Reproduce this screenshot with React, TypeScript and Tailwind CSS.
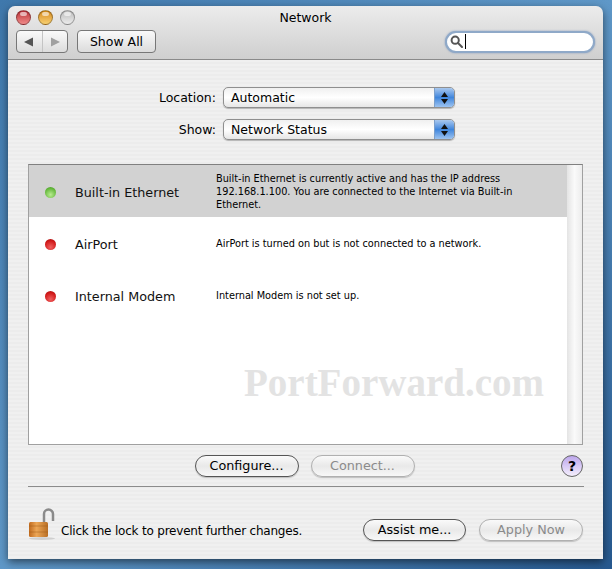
import type { ReactNode } from 'react'

const stripes = 'bg-[repeating-linear-gradient(180deg,#f0f0f0_0px,#f0f0f0_2px,#ececec_2px,#ececec_4px)]'

function Light({ className }: { className: string }) {
  return (
    <div className={`relative w-[15px] h-[15px] rounded-full border border-black/30 ${className}`}>
      <div className="absolute left-[3px] top-[1px] w-[7px] h-[4px] rounded-full bg-white/60" />
    </div>
  )
}

function Pill({ children, width, disabled = false }: { children: ReactNode; width: string; disabled?: boolean }) {
  return (
    <button
      className={`h-[22px] ${width} rounded-full border bg-gradient-to-b from-[#fafafa] via-[#e9e9e9] to-[#f8f8f8] flex items-center justify-center text-[12.75px] ${
        disabled ? 'border-[#b0b0b0] text-[#8a8a8a]' : 'border-[#555] text-black'
      } shadow-[0_1px_1px_rgba(0,0,0,0.2)]`}
    >
      {children}
    </button>
  )
}

function Select({ value }: { value: string }) {
  return (
    <div className="w-[232px] h-[21px] rounded-[5px] border border-[#8f8f8f] bg-gradient-to-b from-[#f0f0f0] via-white to-[#e6e6e6] flex items-center shadow-[0_1px_1px_rgba(0,0,0,0.25)] overflow-hidden">
      <span className="flex-1 pl-[7px] pt-[2px] text-[12.5px] text-black">{value}</span>
      <div className="w-[20px] h-full bg-gradient-to-b from-[#a9c8ee] via-[#3f86dc] to-[#9cc3f0] border-l border-[#7b9fcb] flex flex-col items-center justify-center gap-[2px]">
        <svg width="7" height="5" viewBox="0 0 7 5"><path d="M3.5 0 L7 5 H0 Z" fill="#111" /></svg>
        <svg width="7" height="5" viewBox="0 0 7 5"><path d="M0 0 H7 L3.5 5 Z" fill="#111" /></svg>
      </div>
    </div>
  )
}

function Row({ name, dot, selected = false, children }: { name: string; dot: 'green' | 'red'; selected?: boolean; children: ReactNode }) {
  return (
    <div className={`h-[52px] flex items-center ${selected ? 'bg-[#d2d2d2]' : 'bg-white'}`}>
      <div className="w-[42px] flex justify-center pt-[2px]">
        <div
          className={`w-[11px] h-[11px] rounded-full ${
            dot === 'green'
              ? 'bg-[radial-gradient(circle_at_50%_70%,#b8ec90,#5fb436_70%,#3f8f25)]'
              : 'bg-[radial-gradient(circle_at_50%_75%,#f06060,#d01818_65%,#9a1010)]'
          }`}
        />
      </div>
      <div className="w-[145px] pl-[4px] pt-[4px] text-[12.75px] text-[#111]">{name}</div>
      <div className="flex-1 pr-[40px] text-[9.75px] leading-[13px] text-black">{children}</div>
    </div>
  )
}

export default function App() {
  return (
    <div className="w-[612px] h-[569px] overflow-hidden bg-gradient-to-br from-[#3f78ac] via-[#5f98c8] to-[#27598f] pt-[6px] pl-[8px] pr-[9px] font-['DejaVu_Sans',sans-serif]">
      <div className="w-[595px] h-[553px] rounded-t-[7px] flex flex-col shadow-[0_3px_8px_rgba(0,0,0,0.55)]">
        {/* Title bar */}
        <header className="relative h-[54px] shrink-0 rounded-t-[7px] border-b border-[#8a8a8a] bg-gradient-to-b from-[#ececec] to-[#cfcfcf] px-[8px] pt-[4px]">
          <div className="flex items-center gap-[7px] h-[15px]">
            <Light className="bg-gradient-to-b from-[#b82c36] to-[#f08a8a]" />
            <Light className="bg-gradient-to-b from-[#d68a10] to-[#f8d070]" />
            <Light className="bg-gradient-to-b from-[#bcbcbc] to-[#ececec]" />
          </div>
          <div className="absolute inset-x-0 top-[3px] text-center text-[12.5px] text-black">Network</div>
          <div className="flex items-center justify-between mt-[5px]">
            <div className="flex items-center gap-[9px]">
              <div className="w-[52px] h-[23px] rounded-[4px] border border-[#777] bg-gradient-to-b from-[#fafafa] to-[#dcdcdc] flex items-center">
                <div className="flex-1 flex justify-center border-r border-[#c4c4c4] h-full items-center">
                  <svg width="10" height="10" viewBox="0 0 10 10"><path d="M0 5 L9 0.5 V9.5 Z" fill="#555" /></svg>
                </div>
                <div className="flex-1 flex justify-center">
                  <svg width="10" height="10" viewBox="0 0 10 10"><path d="M10 5 L1 0.5 V9.5 Z" fill="#a0a0a0" /></svg>
                </div>
              </div>
              <button className="w-[79px] h-[23px] pt-[1px] rounded-[4px] border border-[#777] bg-gradient-to-b from-[#fafafa] to-[#dcdcdc] text-[12.5px] text-black">Show All</button>
            </div>
            <div className="w-[150px] h-[22px] rounded-full border-[2px] border-[#8fa9c8] bg-white flex items-center pl-[3px] shadow-[0_0_2px_rgba(70,110,170,0.6)]">
              <svg width="13" height="13" viewBox="0 0 13 13" fill="none" stroke="#555" strokeWidth="2">
                <circle cx="5.2" cy="5.2" r="3.6" />
                <path d="M8 8 L12 12" strokeLinecap="round" />
              </svg>
              <div className="ml-[2px] w-px h-[15px] bg-black" />
            </div>
          </div>
        </header>

        {/* Body */}
        <main className={`flex-1 relative px-[20px] pt-[27px] ${stripes}`}>
          <div className="flex flex-col gap-[11px]">
            <div className="flex items-center pl-[127px] pr-[127px]">
              <span className="w-[68px] pt-[2px] text-right text-[12.5px] mr-[7px] text-black shrink-0 -ml-[7px]">Location:</span>
              <Select value="Automatic" />
            </div>
            <div className="flex items-center pl-[127px] pr-[127px]">
              <span className="w-[68px] pt-[2px] text-right text-[12.5px] mr-[7px] text-black shrink-0 -ml-[7px]">Show:</span>
              <Select value="Network Status" />
            </div>
          </div>

          <div className="mt-[24px] h-[281px] w-[555px] border border-[#a0a0a0] border-t-[#808080] flex bg-white">
            <div className="flex-1 flex flex-col">
              <Row name="Built-in Ethernet" dot="green" selected>
                Built-in Ethernet is currently active and has the IP address 192.168.1.100. You are connected to the Internet via Built-in Ethernet.
              </Row>
              <Row name="AirPort" dot="red">AirPort is turned on but is not connected to a network.</Row>
              <Row name="Internal Modem" dot="red">Internal Modem is not set up.</Row>
            </div>
            <div className="w-[15px] bg-gradient-to-r from-[#e4e4e4] via-[#fafafa] to-[#ececec]" />
          </div>

          <div className="relative flex justify-center gap-[12px] mt-[10px] pr-[2px]">
            <Pill width="w-[104px]">Configure...</Pill>
            <Pill width="w-[104px]" disabled>Connect...</Pill>
            <div className="absolute right-0 top-0 w-[22px] h-[22px] rounded-full border border-[#666] bg-gradient-to-b from-[#bda6ec] to-[#f4eefc] flex items-center justify-center text-[14px] font-bold text-black">?</div>
          </div>

          <div className="mt-[9px] h-px bg-[#8c8c8c] w-[556px]" />

          <div className="flex items-center mt-[21px]">
            <div className="w-[33px] shrink-0">
              <svg width="29" height="33" viewBox="0 0 29 33">
                <defs>
                  <linearGradient id="lockBody" x1="0" y1="0" x2="1" y2="0">
                    <stop offset="0" stopColor="#c06a1e" />
                    <stop offset="0.4" stopColor="#eca656" />
                    <stop offset="1" stopColor="#b86e24" />
                  </linearGradient>
                </defs>
                <path d="M16 20 V6 a4.5 4.5 0 0 1 9 0 V13" fill="none" stroke="#8a8a8a" strokeWidth="2.5" />
                <rect x="1" y="14" width="19" height="15" rx="1.5" fill="url(#lockBody)" />
                <path d="M1 18 H20 M1 24 H20" stroke="#a05c18" strokeWidth="0.8" opacity="0.6" />
                <ellipse cx="14" cy="30.5" rx="13" ry="1.5" fill="#000" opacity="0.12" />
              </svg>
            </div>
            <span className="text-[12px] tracking-[-0.2px] text-black mt-[13px] flex-1">Click the lock to prevent further changes.</span>
            <div className="flex gap-[13px] mt-[11px]">
              <Pill width="w-[103px]">Assist me...</Pill>
              <Pill width="w-[104px]" disabled>Apply Now</Pill>
            </div>
          </div>

          <div className="absolute left-[236px] top-[303px] font-['Liberation_Serif',serif] font-bold text-[39px] leading-none text-[#e3e3e3] pointer-events-none">PortForward.com</div>
        </main>
      </div>
    </div>
  )
}
